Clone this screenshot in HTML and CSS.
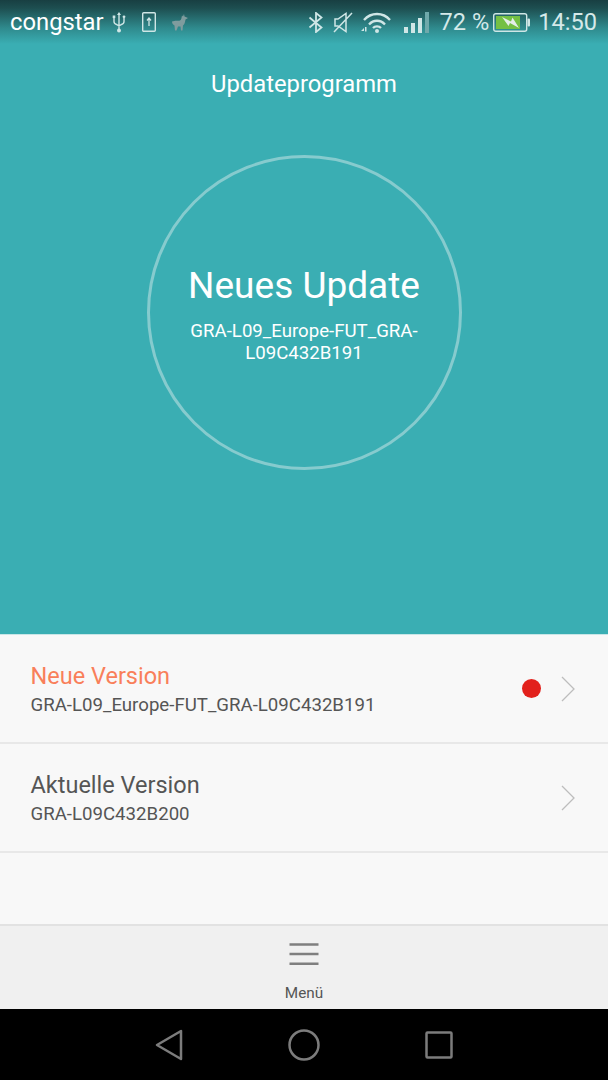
FILE: index.html
```html
<!DOCTYPE html>
<html lang="de">
<head>
    <meta charset="UTF-8">
    <meta name="viewport" content="width=device-width, initial-scale=1.0">
    <title>Updateprogramm</title>
    <link rel="stylesheet" href="styles.css">
</head>
<body>
    <div class="screen">
        <div class="top">
            <div class="status">
                <div class="status_left">
                    <span class="carrier">congstar</span>
                    <svg class="ico" width="14" height="21" viewBox="0 0 14 21" fill="none" stroke="#cfe6e6" stroke-width="1.400">
                        <path d="M7 2v15M2 6v3.500c0 1.500 1 2.500 2.500 3L7 14l2.500-1.500c1.500-.5 2.500-1.500 2.500-3V6"/>
                        <path d="M7 0L5 3h4z" fill="#cfe6e6" stroke="none"/>
                        <circle cx="7" cy="18.500" r="2" fill="#cfe6e6" stroke="none"/>
                        <rect x=".7" y="3.500" width="2.600" height="2.600" fill="#cfe6e6" stroke="none"/>
                        <circle cx="12" cy="4.800" r="1.400" fill="#cfe6e6" stroke="none"/>
                    </svg>
                    <svg class="ico ico_sd" width="14" height="20" viewBox="0 0 14 20" fill="none" stroke="#cfe6e6" stroke-width="1.400">
                        <rect x=".7" y=".7" width="12.600" height="18.600" rx="1"/>
                        <path d="M7 14V6.500M5 8.500l2-2.500 2 2.500" stroke-width="1.300"/>
                    </svg>
                    <svg class="ico ico_llama" width="16" height="17" viewBox="0 0 16 17" fill="#7f9c9e">
                        <path d="M0 7.500c3-1.500 6-.5 8-1 1.500-.5 1.500-3 2-5L11 2.500 12 0l.5 2.500L16 4l-2.500 1.500c-.5 3-1 5-2.500 6l-.5 5H9l-.5-4H6l-1.500 4H3l-.5-5C1 10.500 0 9.500 0 7.500z"/>
                    </svg>
                </div>
                <div class="status_right">
                    <svg class="ico" width="15" height="21" viewBox="0 0 15 21" fill="none" stroke="#cfe6e6" stroke-width="1.800">
                        <path d="M1.500 5.500l12 10-5.500 4.500V1l5.500 4.500-12 10"/>
                    </svg>
                    <svg class="ico ico_mute" width="20" height="21" viewBox="0 0 20 21" fill="none" stroke="#cfe6e6" stroke-width="1.500">
                        <path d="M2 7h3l8-5.500v18L5 14H2zM1 20L19 1"/>
                    </svg>
                    <svg class="ico ico_wifi" width="30" height="21" viewBox="0 0 30 21" fill="none" stroke="#cfe6e6" stroke-width="2.300">
                        <path d="M3 8c7-8 19-8 26 0M8 12.500c4.500-5 11.500-5 16 0M12 16c2-2.200 6-2.200 8 0"/>
                        <circle cx="16" cy="19" r="2" fill="#cfe6e6" stroke="none"/>
                        <path d="M0 19l3-3v3zM4 15h1.500v4.500H4z" fill="#cfe6e6" stroke="none"/>
                    </svg>
                    <svg class="ico ico_sig" width="25" height="21" viewBox="0 0 25 21" fill="#cfe6e6">
                        <rect x="0" y="15" width="4" height="6"/>
                        <rect x="7" y="11" width="4" height="10"/>
                        <rect x="14" y="6" width="4" height="15"/>
                        <rect x="21" y="0" width="4" height="21" fill="#6fa9ab"/>
                    </svg>
                    <span class="status_txt pct">72 %</span>
                    <svg class="ico ico_batt" width="37" height="19" viewBox="0 0 37 19" fill="none">
                        <rect x=".7" y=".7" width="33" height="17.600" rx="2" stroke="#cfe6e6" stroke-width="1.400"/>
                        <rect x="3" y="3" width="24" height="13" fill="#74c044"/>
                        <rect x="34.500" y="5.500" width="2.500" height="8" rx="1" fill="#cfe6e6"/>
                        <path d="M9 4l9 4.500 1.500-4 6.500 10.500-9-5-1.500 3z" fill="#e4eee8"/>
                    </svg>
                    <span class="status_txt time">14:50</span>
                </div>
            </div>
            <h1 class="title">Updateprogramm</h1>
            <div class="circle">
                <div class="circle_big">Neues Update</div>
                <div class="circle_small">GRA-L09_Europe-FUT_GRA-L09C432B191</div>
            </div>
        </div>
        <div class="list">
            <div class="item">
                <div class="item_text">
                    <div class="item_title orange">Neue Version</div>
                    <div class="item_sub">GRA-L09_Europe-FUT_GRA-L09C432B191</div>
                </div>
                <span class="dot"></span>
                <svg class="chev" width="16" height="26" viewBox="0 0 16 26" fill="none" stroke="#bdbdbd" stroke-width="1.300"><path d="M2 1l12 12L2 25"/></svg>
            </div>
            <div class="item">
                <div class="item_text">
                    <div class="item_title">Aktuelle Version</div>
                    <div class="item_sub">GRA-L09C432B200</div>
                </div>
                <svg class="chev" width="16" height="26" viewBox="0 0 16 26" fill="none" stroke="#bdbdbd" stroke-width="1.300"><path d="M2 1l12 12L2 25"/></svg>
            </div>
        </div>
        <div class="menu">
            <svg width="30" height="24" viewBox="0 0 30 24" fill="none" stroke="#7f7f7f" stroke-width="2.400">
                <path d="M.5 2.500h29M.5 12h29M.5 21.800h29"/>
            </svg>
            <span class="menu_label">Menü</span>
        </div>
        <div class="nav">
            <svg width="28" height="32" viewBox="0 0 28 32" fill="none" stroke="#7c7c7c" stroke-width="2.500" stroke-linejoin="round"><path d="M26 2v28L2 16z"/></svg>
            <svg width="32" height="32" viewBox="0 0 32 32" fill="none" stroke="#7c7c7c" stroke-width="2.500"><circle cx="16" cy="16" r="14.500"/></svg>
            <svg width="28" height="28" viewBox="0 0 28 28" fill="none" stroke="#7c7c7c" stroke-width="2.500" stroke-linejoin="round"><rect x="1.500" y="1.500" width="25" height="25" rx="1"/></svg>
        </div>
    </div>
</body>
</html>
```

FILE: styles.css
```css
*{margin: 0; padding: 0; box-sizing: border-box;}
body{font-family: Roboto, "Liberation Sans", sans-serif; background-color: #f8f8f8;}
.screen{width: 608px; height: 1080px; display: flex; flex-direction: column; overflow: hidden;}

.top{height: 634px; display: flex; flex-direction: column; align-items: center;
 background: linear-gradient(#183f42 0, #1d4e50 8px, #2f8a8d 28px, #3aaeb3 44px, #3aaeb3 100%);}
.status{width: 100%; height: 44px; display: flex; justify-content: space-between; align-items: center;
 padding: 0 11px 0 10px; color: #eef6f6;}
.status_left, .status_right{display: flex; align-items: center;}
.carrier{font-size: 23.800px; margin-right: 8px; color: #fff;}
.ico{display: block;}
.ico_sd{margin-left: 16px;}
.ico_llama{margin-left: 16px;}
.ico_mute{margin-left: 10px;}
.ico_wifi{margin-left: 8px;}
.ico_sig{margin-left: 13px;}
.status_txt{font-size: 23.600px; color: #d5e9e9;}
.pct{margin-left: 11px;}
.ico_batt{margin-left: 4px;}
.time{margin-left: 8px;}

.title{font-size: 23.800px; font-weight: 400; color: #fff; margin-top: 26px; line-height: 28px;}
.circle{width: 315px; height: 315px; margin-top: 57px; border: 3.500px solid #86cbce; border-radius: 50%;
 display: flex; flex-direction: column; align-items: center; color: #fff; text-align: center;}
.circle_big{font-size: 37px; line-height: 44px; margin-top: 106px;}
.circle_small{font-size: 18.650px; line-height: 22px; width: 240px; margin-top: 12px; overflow-wrap: anywhere;}

.list{height: 290px; background-color: #f8f8f8; border-top: 1px solid #c9e6e7;}
.item{height: 109px; display: flex; align-items: center; padding: 0 32px 0 30.500px; border-bottom: 2px solid #e8e8e8;}
.item_text{flex: 1; padding-top: 2px;}
.item_title{font-size: 23.500px; line-height: 28px; color: #555;}
.orange{color: #f97f5a;}
.item_sub{font-size: 18.650px; line-height: 24px; margin-top: 3px; color: #555;}
.dot{width: 19px; height: 19px; border-radius: 50%; background-color: #e2211c; margin-right: 19px;}

.menu{height: 85px; background-color: #f0f0f0; border-top: 2px solid #e2e2e2;
 display: flex; flex-direction: column; align-items: center; padding-top: 16px;}
.menu_label{font-size: 15.300px; color: #555; margin-top: 18px;}

.nav{flex: 1; background-color: #000; display: flex; align-items: center; justify-content: space-between;
 padding: 0 155px 0 155px;}
```
